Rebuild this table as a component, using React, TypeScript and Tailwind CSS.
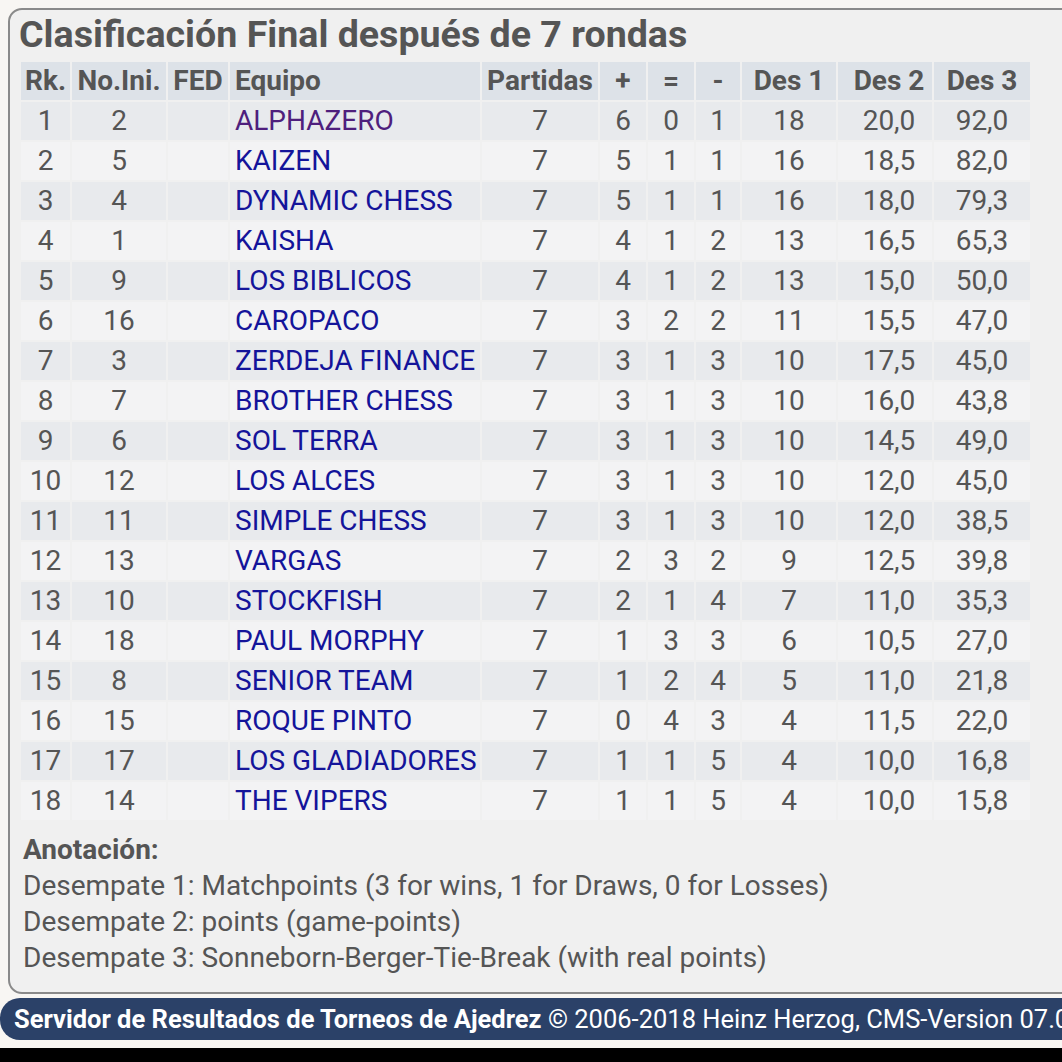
import React from "react"

type Row = [number, number, string, number, number, number, number, number, string, string]

const rows: Row[] = [
  [1, 2, "ALPHAZERO", 7, 6, 0, 1, 18, "20,0", "92,0"],
  [2, 5, "KAIZEN", 7, 5, 1, 1, 16, "18,5", "82,0"],
  [3, 4, "DYNAMIC CHESS", 7, 5, 1, 1, 16, "18,0", "79,3"],
  [4, 1, "KAISHA", 7, 4, 1, 2, 13, "16,5", "65,3"],
  [5, 9, "LOS BIBLICOS", 7, 4, 1, 2, 13, "15,0", "50,0"],
  [6, 16, "CAROPACO", 7, 3, 2, 2, 11, "15,5", "47,0"],
  [7, 3, "ZERDEJA FINANCE", 7, 3, 1, 3, 10, "17,5", "45,0"],
  [8, 7, "BROTHER CHESS", 7, 3, 1, 3, 10, "16,0", "43,8"],
  [9, 6, "SOL TERRA", 7, 3, 1, 3, 10, "14,5", "49,0"],
  [10, 12, "LOS ALCES", 7, 3, 1, 3, 10, "12,0", "45,0"],
  [11, 11, "SIMPLE CHESS", 7, 3, 1, 3, 10, "12,0", "38,5"],
  [12, 13, "VARGAS", 7, 2, 3, 2, 9, "12,5", "39,8"],
  [13, 10, "STOCKFISH", 7, 2, 1, 4, 7, "11,0", "35,3"],
  [14, 18, "PAUL MORPHY", 7, 1, 3, 3, 6, "10,5", "27,0"],
  [15, 8, "SENIOR TEAM", 7, 1, 2, 4, 5, "11,0", "21,8"],
  [16, 15, "ROQUE PINTO", 7, 0, 4, 3, 4, "11,5", "22,0"],
  [17, 17, "LOS GLADIADORES", 7, 1, 1, 5, 4, "10,0", "16,8"],
  [18, 14, "THE VIPERS", 7, 1, 1, 5, 4, "10,0", "15,8"],
]

const headers = ["Rk.", "No.Ini.", "FED", "Equipo", "Partidas", "+", "=", "-", "Des 1", "Des 2", "Des 3"]
const widths = ["w-[49px]", "w-[94px]", "w-[60px]", "w-[250px]", "w-[116px]", "w-[46px]", "w-[46px]", "w-[44px]", "w-[94px]", "w-[94px]", "w-[96px]"]

// alignment per column
function align(i: number) {
  if (i === 3) return "text-left pl-[5px]"
  if (i === 9) return "text-center pl-[8px]"
  return "text-center"
}

export default function App() {
  return (
    <div
      className="w-[1062px] h-[1062px] overflow-hidden bg-[#f8f6f3] flex flex-col"
      style={{ fontFamily: "Roboto, 'Liberation Sans', sans-serif" }}
    >
      <div className="mt-2 ml-2 w-[1120px] h-[986px] shrink-0 rounded-[14px] border-2 border-[#8a8a8a] bg-[#f0f0f0] pl-[9px] pt-[3px]">
        <h1 className="text-[37.6px] leading-[42px] font-bold text-[#555555] whitespace-nowrap">
          Clasificación Final después de 7 rondas
        </h1>
        <table className="mt-[5px] border-separate border-spacing-[2px] text-[28px] text-[#555555] table-fixed">
          <thead>
            <tr>
              {headers.map((h, i) => (
                <th
                  key={h}
                  className={`${widths[i]} h-[38px] p-0 bg-[#dde2e8] font-bold leading-none whitespace-nowrap ${align(i)}`}
                >
                  {h}
                </th>
              ))}
            </tr>
          </thead>
          <tbody>
            {rows.map((r, idx) => {
              const bg = idx % 2 === 0 ? "bg-[#e8eaed]" : "bg-[#f3f3f4]"
              const cells = [String(r[0]), String(r[1]), "", r[2], String(r[3]), String(r[4]), String(r[5]), String(r[6]), String(r[7]), r[8], r[9]]
              return (
                <tr key={r[0]}>
                  {cells.map((v, i) => (
                    <td
                      key={i}
                      className={`h-[38px] p-0 leading-none whitespace-nowrap ${bg} ${align(i)} ${
                        i === 3 ? (idx === 0 ? "text-[#4f1f7d]" : "text-[#14149a]") : ""
                      }`}
                    >
                      {v}
                    </td>
                  ))}
                </tr>
              )
            })}
          </tbody>
        </table>
        <div className="mt-[10px] pl-[4px] text-[28px] leading-[36px] text-[#555555] whitespace-nowrap">
          <div className="font-bold">Anotación:</div>
          <div>Desempate 1: Matchpoints (3 for wins, 1 for Draws, 0 for Losses)</div>
          <div>Desempate 2: points (game-points)</div>
          <div>Desempate 3: Sonneborn-Berger-Tie-Break (with real points)</div>
        </div>
      </div>
      <div className="mt-[4px] h-[42px] w-[1120px] shrink-0 rounded-l-[20px] bg-[#2b4168] pl-[14px] flex items-center whitespace-nowrap text-[25.5px] text-white">
        <span className="font-bold">Servidor de Resultados de Torneos de Ajedrez</span>
        <span>&nbsp;© 2006-2018 Heinz Herzog, CMS-Version 07.0</span>
      </div>
      <div className="mt-[8px] flex-1 bg-black" />
    </div>
  )
}
